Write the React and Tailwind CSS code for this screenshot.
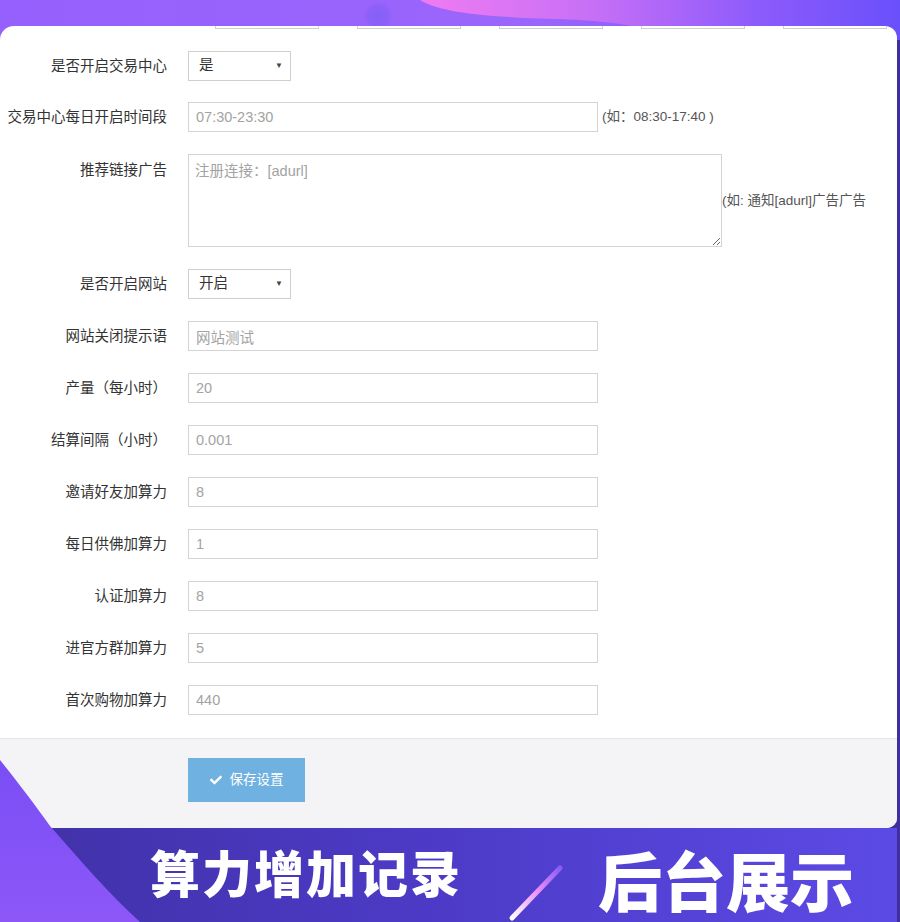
import { FaCheck } from "react-icons/fa";

const cn = '"Liberation Sans", "Noto Sans CJK SC", sans-serif';

const fields = [
  { label: "网站关闭提示语", value: "网站测试" },
  { label: "产量（每小时）", value: "20" },
  { label: "结算间隔（小时）", value: "0.001" },
  { label: "邀请好友加算力", value: "8" },
  { label: "每日供佛加算力", value: "1" },
  { label: "认证加算力", value: "8" },
  { label: "进官方群加算力", value: "5" },
  { label: "首次购物加算力", value: "440" },
];

function Label({ children, top }) {
  return (
    <div
      className={
        "w-[167px] shrink-0 text-right text-[14.5px] leading-5 text-[#333] " +
        (top ? "pt-[6px]" : "")
      }
    >
      {children}
    </div>
  );
}

function FakeSelect({ value }) {
  return (
    <div className="ml-[21px] flex h-[30px] w-[103px] items-center justify-between border border-[#cfcfcf] bg-white pl-[10px] pr-[7px] text-[14.5px] text-[#333]">
      <span>{value}</span>
      <span className="text-[8px] text-[#444]">▼</span>
    </div>
  );
}

function TextInput({ value }) {
  return (
    <input
      readOnly
      defaultValue={value}
      className="ml-[21px] h-[30px] w-[410px] border border-[#d4d4d4] bg-white px-[7px] text-[14.5px] text-[#a3a3a3] outline-none"
      style={{ fontFamily: cn }}
    />
  );
}

function TopArt() {
  return (
    <svg
      className="absolute left-0 top-0"
      width="900"
      height="40"
      viewBox="0 0 900 40"
    >
      <defs>
        <linearGradient id="base" x1="0" x2="1" y1="0" y2="0">
          <stop offset="0" stopColor="#9560fd" />
          <stop offset="0.6" stopColor="#9a66fb" />
          <stop offset="0.85" stopColor="#8356fb" />
          <stop offset="1" stopColor="#6a50fa" />
        </linearGradient>
        <linearGradient id="pink" x1="420" x2="900" y1="0" y2="0" gradientUnits="userSpaceOnUse">
          <stop offset="0" stopColor="#f07bf2" />
          <stop offset="0.35" stopColor="#c870f6" />
          <stop offset="0.7" stopColor="#8d5bfb" />
          <stop offset="1" stopColor="#6a50fb" />
        </linearGradient>
        <radialGradient id="dot">
          <stop offset="0" stopColor="#8460f7" />
          <stop offset="0.7" stopColor="#8d60f9" />
          <stop offset="1" stopColor="#9560fd" stopOpacity="0" />
        </radialGradient>
      </defs>
      <rect width="900" height="40" fill="url(#base)" />
      <path
        d="M420 0 C440 12 480 17 560 19 C605 21 630 24 655 32 L900 32 L900 0 Z"
        fill="url(#pink)"
      />
      <circle cx="378" cy="16" r="15" fill="url(#dot)" />
    </svg>
  );
}

export default function App() {
  return (
    <div
      className="relative h-[922px] w-[900px] overflow-hidden bg-[#3f2f9e]"
      style={{ fontFamily: cn }}
    >
      <TopArt />
      <div className="h-[26px]" />

      {/* card */}
      <div className="relative w-[897px] overflow-hidden rounded-tl-[14px] rounded-tr-[12px] rounded-br-[10px] bg-white">
        <div className="ml-[215px] flex h-[3px] gap-[38px]">
          {[0, 1, 2, 3, 4].map((i) => (
            <div
              key={i}
              className="h-[3px] w-[104px] border-x border-b border-[#cfcfcf]"
            />
          ))}
        </div>

        <div className="flex flex-col gap-[22px] pb-[23px] pt-[22px]">
          <div className="mb-[-1px] flex items-center">
            <Label>是否开启交易中心</Label>
            <FakeSelect value="是" />
          </div>

          <div className="flex items-center">
            <Label>交易中心每日开启时间段</Label>
            <TextInput value="07:30-23:30" />
            <span className="ml-[4px] text-[13.5px] text-[#555]">
              (如：08:30-17:40 )
            </span>
          </div>

          <div className="flex items-start">
            <Label top>推荐链接广告</Label>
            <textarea
              readOnly
              placeholder="注册连接：[adurl]"
              className="ml-[21px] h-[93px] w-[534px] border border-[#d4d4d4] bg-white px-[6px] py-[6px] text-[14.5px] leading-5 text-[#a3a3a3] outline-none placeholder:text-[#a3a3a3]"
              style={{ fontFamily: cn }}
            />
            <span className="self-center pt-[1px] text-[13.5px] text-[#555]">
              (如: 通知[adurl]广告广告
            </span>
          </div>

          <div className="flex items-center">
            <Label>是否开启网站</Label>
            <FakeSelect value="开启" />
          </div>

          {fields.map((f) => (
            <div key={f.label} className="flex items-center">
              <Label>{f.label}</Label>
              <TextInput value={f.value} />
            </div>
          ))}
        </div>

        <div className="h-[90px] border-t border-[#e6e6e6] bg-[#f4f4f6] pl-[188px] pt-[19px]">
          <button className="flex h-[44px] w-[117px] items-center justify-center gap-[8px] bg-[#6fb1e0] text-[13.5px] text-white">
            <FaCheck className="text-[12px]" />
            保存设置
          </button>
        </div>
      </div>

      {/* bottom band */}
      <div className="flex h-[94px] w-[897px] items-center bg-gradient-to-r from-[#4131a6] via-[#4d3bc8] to-[#5c4ae5] pl-[150px]">
        <span
          className="mt-[-8px] text-[50px] font-black leading-none tracking-[2px] text-white"
          style={{ fontFamily: '"Noto Sans CJK SC", sans-serif' }}
        >
          算力增加记录
        </span>
        <svg width="60" height="60" viewBox="0 0 60 60" className="ml-[44px] mt-[34px]">
          <defs>
            <linearGradient id="slash" x1="0" y1="1" x2="1" y2="0">
              <stop offset="0" stopColor="#ffffff" />
              <stop offset="0.55" stopColor="#e98cf5" />
              <stop offset="1" stopColor="#8a5cf5" />
            </linearGradient>
          </defs>
          <line
            x1="6"
            y1="56"
            x2="54"
            y2="6"
            stroke="url(#slash)"
            strokeWidth="5"
            strokeLinecap="round"
          />
        </svg>
        <span
          className="ml-[32px] mt-[6px] text-[64px] font-black leading-none text-white"
          style={{ fontFamily: '"Noto Sans CJK SC", sans-serif' }}
        >
          后台展示
        </span>
      </div>

      {/* corner triangle over the card */}
      <svg
        className="absolute bottom-0 left-0"
        width="150"
        height="162"
        viewBox="0 0 150 162"
      >
        <defs>
          <linearGradient id="tri" x1="0" y1="0" x2="0" y2="1">
            <stop offset="0" stopColor="#7a4ef5" />
            <stop offset="1" stopColor="#8d57f8" />
          </linearGradient>
        </defs>
        <path d="M0 0 C20 25 35 45 50 66 C80 100 110 135 140 162 L0 162 Z" fill="url(#tri)" />
      </svg>
    </div>
  );
}
